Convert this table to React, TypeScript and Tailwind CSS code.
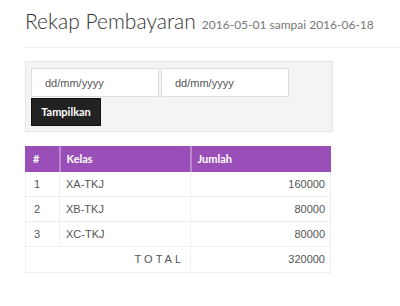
import React from "react";

const rows = [
  { no: 1, kelas: "XA-TKJ", jumlah: "160000" },
  { no: 2, kelas: "XB-TKJ", jumlah: "80000" },
  { no: 3, kelas: "XC-TKJ", jumlah: "80000" },
];

const App = () => {
  return (
    <div className="w-[400px] h-[306px] bg-white pl-[25px] pt-[6px] font-['Lato',sans-serif] text-[#555]">
      {/* Page Header */}
      <div className="flex items-baseline gap-[6px] pb-[11px] border-b border-[#eee] whitespace-nowrap">
        <h1 className="text-[21px] font-light text-[#333] leading-[30px]">Rekap Pembayaran</h1>
        <span className="text-[12px] text-[#777]">2016-05-01 sampai 2016-06-18</span>
      </div>

      {/* Filter */}
      <div className="mt-[13px] w-[308px] h-[71px] bg-[#f4f4f4] border border-[#e6e6e6] px-[5px] pt-[6px]">
        <div className="flex gap-[2px]">
          <input
            className="w-[128px] h-[29px] bg-white border border-[#ddd] pl-[13px] text-[11px] font-['Liberation_Sans',sans-serif] text-[#555] placeholder:text-[#555] outline-none"
            placeholder="dd/mm/yyyy"
          />
          <input
            className="w-[128px] h-[29px] bg-white border border-[#ddd] pl-[13px] text-[11px] font-['Liberation_Sans',sans-serif] text-[#555] placeholder:text-[#555] outline-none"
            placeholder="dd/mm/yyyy"
          />
        </div>
        <button className="mt-[1px] w-[70px] h-[28px] bg-[#222] border border-[#111] text-white text-[11px] font-bold">
          Tampilkan
        </button>
      </div>

      {/* Table */}
      <table className="mt-[14px] w-[306px] border-collapse text-[11px] font-['Liberation_Sans',sans-serif] text-[#555]">
        <thead>
          <tr className="bg-[#9a4fb8] text-white font-['Lato',sans-serif] text-[11px] font-bold h-[25px]">
            <th className="w-[34px] text-left pl-[7px] border border-[#9a4fb8] border-r-[#b98acd] border-r-2">#</th>
            <th className="w-[131px] text-left pl-[6px] border border-[#9a4fb8] border-r-[#b98acd] border-r-2">Kelas</th>
            <th className="text-left pl-[6px] border border-[#9a4fb8]">Jumlah</th>
          </tr>
        </thead>
        <tbody>
          {rows.map((r) => (
            <tr key={r.no} className="h-[25px]">
              <td className="pl-[8px] border border-[#eee]">{r.no}</td>
              <td className="pl-[6px] border border-[#eee]">{r.kelas}</td>
              <td className="pr-[5px] text-right border border-[#eee]">{r.jumlah}</td>
            </tr>
          ))}
          <tr className="h-[26px]">
            <td colSpan={2} className="pr-[6px] text-right tracking-[3px] border border-[#eee]">
              TOTAL
            </td>
            <td className="pr-[5px] text-right border border-[#eee]">320000</td>
          </tr>
        </tbody>
      </table>
    </div>
  );
};

export default App;
